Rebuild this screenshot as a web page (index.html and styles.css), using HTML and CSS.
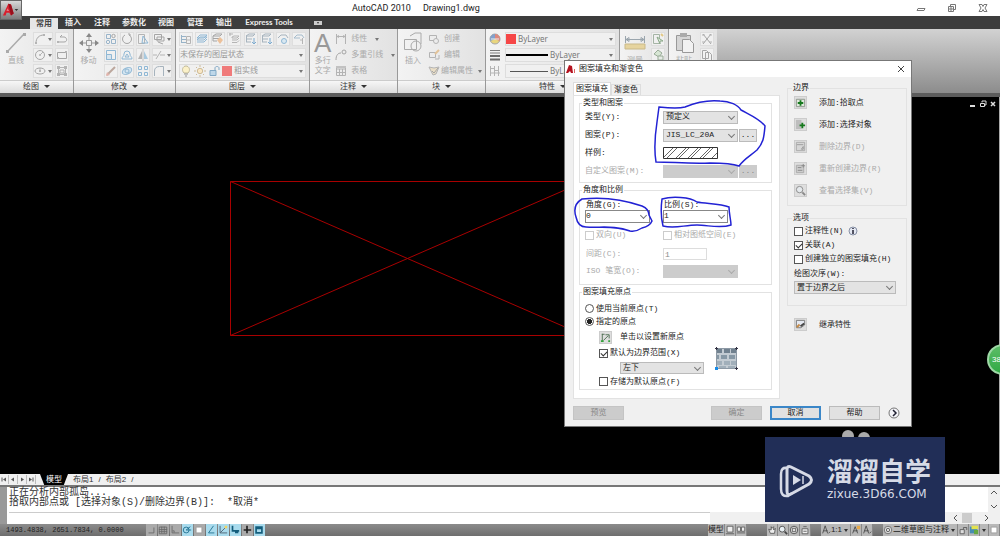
FILE: index.html
```html
<!DOCTYPE html>
<html lang="zh-CN">
<head>
<meta charset="utf-8">
<title>AutoCAD 2010 - Drawing1.dwg</title>
<link rel="stylesheet" href="styles.css">
</head>
<body>
<svg class="sprite" aria-hidden="true">
  <symbol id="i-arc" viewBox="0 0 12 12"><path d="M2 10C2 5 5 2 10 2" stroke="#999"/><path d="M1 9h2v2H1zM9 1h2v2H9z" fill="#aaa"/></symbol>
  <symbol id="i-circle" viewBox="0 0 12 12"><circle cx="6" cy="6" r="4.5" stroke="#999"/><path d="M6 6L9 3" stroke="#aaa"/><circle cx="6" cy="6" r="1" fill="#aaa"/></symbol>
  <symbol id="i-ellipse" viewBox="0 0 12 12"><ellipse cx="6" cy="6" rx="5" ry="3" stroke="#999"/><circle cx="6" cy="6" r="1" fill="#999"/><path d="M6 3v3" stroke="#aaa"/></symbol>
  <symbol id="i-pline" viewBox="0 0 12 12"><path d="M1 9h7c4 0 3-5 0-5H4M4 4L6 2" stroke="#999"/><path d="M1 8h2v2H1z" fill="#aaa"/></symbol>
  <symbol id="i-rect" viewBox="0 0 12 12"><path d="M1.500 3.500h9v6h-9z" stroke="#999"/><path d="M9 2h2v2H9zM1 8h2v2H1z" fill="#aaa"/></symbol>
  <symbol id="i-region" viewBox="0 0 12 12"><path d="M2.500 2.500h7v7h-7zM4 5h4v3H4z" stroke="#aaa"/><path d="M1 1h3v3H1zM8 1h3v3H8zM1 8h3v3H1zM8 8h3v3H8z" fill="#aaa"/></symbol>
  <symbol id="i-copy" viewBox="0 0 12 12"><path d="M1.500 1.500h4v4h-4zM6.500 6.500h4v4h-4z" stroke="#8aaac4"/><circle cx="8.500" cy="3" r="1.700" stroke="#999"/><circle cx="3" cy="9" r="1.700" stroke="#8aaac4"/></symbol>
  <symbol id="i-rotate" viewBox="0 0 12 12"><path d="M4 2a4.500 4.500 0 1 0 4 0M8 2V0M8 2h2" stroke="#999"/></symbol>
  <symbol id="i-stretch" viewBox="0 0 12 12"><path d="M1.500 1.500h6v9h-6z" stroke="#aaa"/><path d="M6 3l5 7H5z" stroke="#7faed0"/></symbol>
  <symbol id="i-trim" viewBox="0 0 12 12"><path d="M1.500 1.500h7v5h-7zM4 4h7v4H4zM5 9l5 2" stroke="#999"/></symbol>
  <symbol id="i-scale" viewBox="0 0 12 12"><path d="M1.500 1.500h9v9h-9z" stroke="#7faed0"/><path d="M1.500 5.500h5v5h-5z" stroke="#7faed0" fill="#d4e4ef"/></symbol>
  <symbol id="i-offset" viewBox="0 0 12 12"><path d="M1 10c0-3 2-2 2-5a3 3 0 0 1 6 0c0 3 2 2 2 5z" stroke="#7faed0"/><path d="M4 8l2-3 2 3z" stroke="#7faed0"/></symbol>
  <symbol id="i-mirror" viewBox="0 0 12 12"><path d="M5 2v8H1z" fill="#aaa"/><path d="M7 2v8h4z" fill="#9cc3dd"/><path d="M6 0v12" stroke="#bbb"/></symbol>
  <symbol id="i-extend" viewBox="0 0 12 12"><path d="M0 6h4M7 6h5M3 10L8 2" stroke="#aaa"/></symbol>
  <symbol id="i-erase" viewBox="0 0 12 12"><path d="M2 10L10 2" stroke="#b39b8f" stroke-width="2"/><path d="M1 11l4-1-3-3z" fill="#e0a9a0"/></symbol>
  <symbol id="i-explode" viewBox="0 0 12 12"><ellipse cx="6" cy="6" rx="5" ry="3" transform="rotate(-25 6 6)" stroke="#7faed0" fill="#cfe3f1"/><circle cx="6" cy="6" r="2" stroke="#7faed0"/></symbol>
  <symbol id="i-array" viewBox="0 0 12 12"><path d="M1.500 1.500h3v3h-3zM7.500 1.500h3v3h-3zM1.500 7.500h3v3h-3zM7.500 7.500h3v3h-3z" stroke="#7faed0"/></symbol>
  <symbol id="i-fillet" viewBox="0 0 12 12"><path d="M1.500 11V6c0-3 2-4.500 5-4.500h4V11" stroke="#9aa9b5"/></symbol>
  <symbol id="i-layer" viewBox="0 0 12 12"><path d="M1 3.500h5M1 6.500h5M1 9.500h5M1.500 2v8" stroke="#88a9c2"/><path d="M6.500 3.500h4v7h-4zM6 7h5" stroke="#aaa"/></symbol>
  <symbol id="i-stack" viewBox="0 0 12 12"><path d="M1 7l3-3h7L8 7zM1 9l7 0 3-3M1 5l3-3h7L8 5z" stroke="#7faed0"/></symbol>
  <symbol id="i-orange" viewBox="0 0 12 12"><path d="M1 3l3-2h6L8 3zM1 3v5h4M1 5.500h6" stroke="#999"/><path d="M8 4l3 3-3 4-3-4z" fill="#ecb98c"/></symbol>
  <symbol id="i-tree" viewBox="0 0 12 12"><path d="M1 1h4M2 0v3M4 4l2-1h5l-2 2H4zM4 7h5l2-2M4 9.500h5l2-2" stroke="#aaa"/></symbol>
  <symbol id="i-freeze" viewBox="0 0 12 12"><path d="M1 3l3-2h6L8 3zM1 6h6M1 9h5M1.500 3v6" stroke="#9aa9b5"/><path d="M9 5v6M7 9l2 2 2-2" stroke="#6aa0ca"/></symbol>
  <symbol id="i-layoff" viewBox="0 0 12 12"><path d="M1 5l3-3h5l2 3" stroke="#9aa9b5"/><circle cx="7" cy="8" r="2.500" stroke="#7faed0" fill="#d6e8f3"/></symbol>
  <symbol id="i-uniso" viewBox="0 0 12 12"><path d="M1 5l3-3h5l2 3M1 5h6" stroke="#9ab4c6"/><path d="M9.500 5v6M7 7h3" stroke="#aaa"/></symbol>
  <symbol id="i-bulb" viewBox="0 0 12 12"><path d="M4 8C1 5 3 1 6 1s5 4 2 7z" fill="#fdf2c2" stroke="#bbb08a"/><path d="M4 9h4M5 11h2" stroke="#888"/></symbol>
  <symbol id="i-sun" viewBox="0 0 12 12"><circle cx="6" cy="6" r="2.700" fill="#fbe6bd" stroke="#c9b48a"/><path d="M6 0v2M6 10v2M0 6h2M10 6h2M2 2l1 1M9 9l1 1M2 10l1-1M9 3l1-1" stroke="#c9b48a"/></symbol>
  <symbol id="i-lock" viewBox="0 0 12 12"><path d="M2 5.500h6v5H2z" fill="#b6d3e8" stroke="#6f9dbf"/><path d="M7 5V3c0-2 4-2 4 0v2" stroke="#6f9dbf"/></symbol>
  <symbol id="i-linear" viewBox="0 0 12 12"><path d="M1.500 1v10M10.500 1v10M2 3.500h8M2 3.500l2-1M2 3.500l2 1M10 3.500l-2-1M10 3.500l-2 1" stroke="#aaa"/></symbol>
  <symbol id="i-leader" viewBox="0 0 12 12"><path d="M1 11c0-5 2-7 5-7" stroke="#999"/><circle cx="9" cy="3" r="2" stroke="#999"/></symbol>
  <symbol id="i-table" viewBox="0 0 12 12"><path d="M1.500 1.500h9v9h-9zM1 4h10M4.500 4v7M7.500 4v7M1 7.500h10" stroke="#aaa"/><path d="M1 1h10v2H1z" fill="#bbb"/></symbol>
  <symbol id="i-block" viewBox="0 0 12 12"><path d="M1.500 2.500h7v5h-7z" stroke="#aaa"/><circle cx="8" cy="8" r="2.500" stroke="#aaa" fill="#eee"/></symbol>
  <symbol id="i-blockedit" viewBox="0 0 12 12"><path d="M1.500 3.500h6v5h-6zM7 10h4V6" stroke="#aaa"/><path d="M7 5l4-4" stroke="#e2bd8a" stroke-width="2"/></symbol>
  <symbol id="i-attr" viewBox="0 0 12 12"><path d="M1 2l5 1 5-1-3 7-3 1z" fill="#eadcc0" stroke="#aaa"/><path d="M4 6l2 2 4-5" stroke="#999"/></symbol>
  <symbol id="i-wheel" viewBox="0 0 12 12"><circle cx="6" cy="6" r="5" fill="#e8d26a" stroke="#999"/><path d="M6 6V1a5 5 0 0 1 4.500 7z" fill="#d9776c"/><path d="M6 6V1A5 5 0 0 0 1.500 8z" fill="#6f93c7"/><path d="M2 6h8" stroke="#eee"/></symbol>
  <symbol id="i-weight" viewBox="0 0 12 12"><path d="M1 1.500h10M1 4h10" stroke="#666"/><path d="M1 7h10M1 10.500h10" stroke="#555" stroke-width="2"/></symbol>
  <symbol id="i-ltype" viewBox="0 0 12 12"><path d="M1.500 1v10M5.500 1v10M9.500 1v10M1 3.500h4M6 5.500h4M1 8h10" stroke="#aaa"/></symbol>
  <symbol id="i-green" viewBox="0 0 12 12"><path d="M1.500 1.500h6v9h-6z" stroke="#9a9"/><path d="M5 4l6 4-3 0 0 3z" fill="#dfeedd" stroke="#7a9c78"/><path d="M9 1l2 2" stroke="#dfc274" stroke-width="2"/></symbol>
  <symbol id="i-shapes" viewBox="0 0 12 12"><path d="M2 5l4-4 4 3-3 4z" fill="#d3e5d0" stroke="#8a9f88"/><path d="M6 7h5v4H6z" fill="#e5ebe5" stroke="#8a9f88"/></symbol>
  <symbol id="i-cut" viewBox="0 0 12 12"><path d="M2 1l8 10M10 1L2 11" stroke="#999"/><path d="M1 9h3M8 9h3M1 2h3M8 2h3" stroke="#aaa"/></symbol>
  <symbol id="i-pages" viewBox="0 0 12 12"><path d="M1.500 1.500h4l2 2v6h-6zM4.500 3.500h4l2 2v6h-6z" fill="#f3f3f3" stroke="#999"/></symbol>
  <symbol id="i-pick" viewBox="0 0 12 12"><path d="M1.500 2.500h9v8h-9z" fill="#dfe9dc" stroke="#8b938a"/><path d="M6 3.500v6M3 6.500h6" stroke="#16791d" stroke-width="2"/></symbol>
  <symbol id="i-select" viewBox="0 0 12 12"><path d="M1 1h6v10H1z" fill="#bdbdbd"/><path d="M8 4v6M5 7h6" stroke="#16791d" stroke-width="2"/></symbol>
  <symbol id="i-remove" viewBox="0 0 12 12"><path d="M1.500 1.500h9v9h-9z" fill="#d6d6d6" stroke="#aaa"/><path d="M2 4h7M7 9l2-3v3z" stroke="#999"/></symbol>
  <symbol id="i-recreate" viewBox="0 0 12 12"><path d="M1.500 2.500h8v8h-8z" fill="#ccc" stroke="#aaa"/><path d="M3 5h4M3 8h5M9 1v4M7 3h4" stroke="#888"/></symbol>
  <symbol id="i-view" viewBox="0 0 12 12"><circle cx="5" cy="5" r="3.500" fill="#e5e9ec" stroke="#888"/><path d="M8 8l3 3" stroke="#888" stroke-width="2"/></symbol>
  <symbol id="i-inherit" viewBox="0 0 12 12"><path d="M1.500 1.500h9v5l-4 3h-5z" fill="#e4e8f0" stroke="#777"/><path d="M6 8l4-3" stroke="#444" stroke-width="2"/><path d="M2 9l3-3" stroke="#c58a45" stroke-width="2"/></symbol>
  <symbol id="i-origin" viewBox="0 0 12 12"><path d="M2.500 2v8M2 2.500h3M4 9l5-5M6 3h4v4" stroke="#4c6c50"/><path d="M1 9h3v2H1zM9 9h2v2H9z" fill="#34a33c"/></symbol>
  <symbol id="s-snap" viewBox="0 0 12 12"><path d="M3 9.500h6.500V3" stroke="#666"/></symbol>
  <symbol id="s-grid" viewBox="0 0 12 12"><path d="M1.500 2.500h9v8h-9zM1 5.500h10M1 8h10M4.500 2v8M7.500 2v8" stroke="#666"/></symbol>
  <symbol id="s-ortho" viewBox="0 0 12 12"><path d="M2.500 1v8.500H11M5 9V7H3" stroke="#666"/></symbol>
  <symbol id="s-polar" viewBox="0 0 12 12"><circle cx="5" cy="6" r="3.500" stroke="#176a8c"/><path d="M5 6l5-4M5 6h6" stroke="#176a8c"/></symbol>
  <symbol id="s-box" viewBox="0 0 12 12"><path d="M2.500 2.500h7v7h-7z" fill="#fff" stroke="#999"/></symbol>
  <symbol id="s-angle" viewBox="0 0 12 12"><path d="M9 1L3 9.500h7" stroke="#176a8c"/></symbol>
  <symbol id="s-ducs" viewBox="0 0 12 12"><path d="M2.500 1v8.500H11M3 9l6-6" stroke="#456"/><path d="M8 1h3v3H8z" fill="#f2d35f"/></symbol>
  <symbol id="s-dyn" viewBox="0 0 12 12"><path d="M3 1v6h8M6 9h4" stroke="#135d7c" stroke-width="2"/></symbol>
  <symbol id="s-plus" viewBox="0 0 12 12"><path d="M6 1v9M2 6h9" stroke="#222" stroke-width="2"/></symbol>
  <symbol id="s-qp" viewBox="0 0 12 12"><path d="M2.500 2.500h7v7h-7zM2 4h8" stroke="#135d7c" stroke-width="2"/></symbol>
  <symbol id="s-page" viewBox="0 0 12 12"><path d="M2.500 1.500h7v7h-7zM1 10.500h10" fill="#eee" stroke="#555"/></symbol>
  <symbol id="s-cols" viewBox="0 0 12 12"><path d="M1.500 2.500h4v5h-4zM6.500 2.500h4v5h-4zM1 9.500h10" fill="#eee" stroke="#555"/></symbol>
  <symbol id="s-hand" viewBox="0 0 12 12"><path d="M2 5l2 5h5l1-6-2 2V2L6 4 5 2v4z" fill="#eee" stroke="#555"/></symbol>
  <symbol id="s-zoom" viewBox="0 0 12 12"><circle cx="5" cy="5" r="3.500" fill="#e7eef2" stroke="#444"/><path d="M8 8l3 3" stroke="#444" stroke-width="2"/></symbol>
  <symbol id="s-ring" viewBox="0 0 12 12"><circle cx="6" cy="6" r="4.500" stroke="#444" fill="#ddd"/><path d="M4 4h4v4H4z" stroke="#555"/></symbol>
  <symbol id="s-motion" viewBox="0 0 12 12"><path d="M2.500 4.500h7v6h-7zM4 7.500h4M4 2h4" fill="#eee" stroke="#555"/></symbol>
  <symbol id="s-person" viewBox="0 0 12 12"><path d="M5 1L2 10M5 1l3 9M3 7h5M9 10l2-2" stroke="#444"/></symbol>
  <symbol id="s-ann" viewBox="0 0 12 12"><path d="M5 2L2 10M5 2l3 8M3 7h5" stroke="#444"/><path d="M7 1h4v4H7z" fill="#e6a94a"/></symbol>
  <symbol id="s-gear" viewBox="0 0 12 12"><circle cx="6" cy="6" r="4.500" stroke="#666" fill="#ddd"/><circle cx="6" cy="6" r="2" stroke="#555"/></symbol>
  <symbol id="s-lock" viewBox="0 0 12 12"><path d="M2.500 5.500h5v5h-5z" fill="#ddd" stroke="#555"/><path d="M6.500 5V3h4v3" stroke="#555"/></symbol>
  <symbol id="s-iso" viewBox="0 0 12 12"><path d="M1 2h9v8H1z" fill="#478db3"/><path d="M3 1h8v4H3z" fill="#e3e34f"/><path d="M6 6h5v5H6z" fill="#65a943"/></symbol>
</svg>

<main class="app">
  <header class="titlebar">
    <h1 class="title"><span>AutoCAD 2010</span><span>Drawing1.dwg</span></h1>
    <div class="winbtns">
      <button aria-label="最小化"><svg viewBox="0 0 10 10"><path d="M2 5.500h7l-1 2H1z" stroke="#777"/></svg></button>
      <button aria-label="还原"><svg viewBox="0 0 10 10"><path d="M1.500 3.500h5v5h-5zM3.500 3V1.500h5v5H7M3 5h2v2H3z" stroke="#777"/></svg></button>
      <button aria-label="关闭"><svg viewBox="0 0 10 10"><path d="M1 1.500h3l1 2 1-2h3L7 5l2 3.500H6l-1-2-1 2H1L3 5z" stroke="#777"/></svg></button>
    </div>
    <button class="appbtn" aria-label="应用程序菜单"><svg viewBox="0 0 22 20"><path d="M2 16L8 3l3 1 3 10-3 2-2-3-3 0-1 3z" fill="#d81f2d"/><path d="M8 3l3 1 3 10-3 2z" fill="#98101c"/><path d="M7 8l2 3H6z" fill="#fff" opacity=".4"/><path d="M15 9h4l-2 2z" fill="#333"/></svg></button>
  </header>

  <nav class="menu">
    <button class="menu-item active">常用</button><button class="menu-item">插入</button><button class="menu-item">注释</button><button class="menu-item wide">参数化</button><button class="menu-item">视图</button><button class="menu-item">管理</button><button class="menu-item">输出</button><button class="menu-item express">Express Tools</button><button class="menu-item mini" aria-label="最小化功能区"><svg viewBox="0 0 8 6"><path d="M0 1h8v4H0z" fill="#ccc"/><path d="M3 2h2L4 4z" fill="#333"/></svg></button>
  </nav>

  <section class="ribbon">
    <div class="panel p-draw">
      <div class="tools">
        <button class="big"><svg viewBox="0 0 22 22"><path d="M2 20L19 2" stroke="#aaa" stroke-width="1.500"/><path d="M1 18h3v3H1zM18 1h3v3h-3z" fill="#aaa"/></svg>直线</button>
        <div class="grid2">
          <button class="tool drop"><svg><use href="#i-arc"/></svg></button><button class="tool"><svg><use href="#i-pline"/></svg></button>
          <button class="tool drop"><svg><use href="#i-circle"/></svg></button><button class="tool"><svg><use href="#i-rect"/></svg></button>
          <button class="tool drop"><svg><use href="#i-ellipse"/></svg></button><button class="tool"><svg><use href="#i-region"/></svg></button>
        </div>
      </div>
      <button class="caption drop">绘图</button>
    </div>
    <div class="panel p-modify">
      <div class="tools">
        <button class="big"><svg viewBox="0 0 22 22"><path d="M11 4v14M4 11h14" stroke="#999"/><path d="M11 1l3 4H8zM11 21l3-4H8zM1 11l4-3v6zM21 11l-4-3v6z" fill="#888"/><path d="M8.500 8.500h5v5h-5z" fill="#eee" stroke="#999"/></svg>移动</button>
        <div class="grid4">
          <button class="tool"><svg><use href="#i-copy"/></svg></button><button class="tool"><svg><use href="#i-rotate"/></svg></button><button class="tool"><svg><use href="#i-stretch"/></svg></button><button class="tool drop"><svg><use href="#i-trim"/></svg></button>
          <button class="tool"><svg><use href="#i-scale"/></svg></button><button class="tool"><svg><use href="#i-offset"/></svg></button><button class="tool"><svg><use href="#i-mirror"/></svg></button><button class="tool drop"><svg><use href="#i-extend"/></svg></button>
          <button class="tool"><svg><use href="#i-erase"/></svg></button><button class="tool"><svg><use href="#i-explode"/></svg></button><button class="tool"><svg><use href="#i-array"/></svg></button><button class="tool drop"><svg><use href="#i-fillet"/></svg></button>
        </div>
      </div>
      <button class="caption drop">修改</button>
    </div>
    <div class="panel p-layer">
      <div class="tools stack">
        <div class="line spread"><button class="tool"><svg><use href="#i-layer"/></svg></button><button class="tool"><svg><use href="#i-stack"/></svg></button><button class="tool"><svg><use href="#i-orange"/></svg></button><button class="tool"><svg><use href="#i-tree"/></svg></button><button class="tool"><svg><use href="#i-freeze"/></svg></button><button class="tool"><svg><use href="#i-freeze"/></svg></button><button class="tool"><svg><use href="#i-layoff"/></svg></button><button class="tool"><svg><use href="#i-uniso"/></svg></button></div>
        <button class="field drop">未保存的图层状态</button>
        <button class="field drop"><svg><use href="#i-bulb"/></svg><svg><use href="#i-sun"/></svg><svg><use href="#i-lock"/></svg><i class="swatch soft"></i>粗实线</button>
      </div>
      <button class="caption drop">图层</button>
    </div>
    <div class="panel p-note">
      <div class="tools">
        <button class="big"><span class="bigA">A</span><span>多行<br>文字</span></button>
        <div class="stack">
          <button class="entry drop"><svg><use href="#i-linear"/></svg>线性</button>
          <button class="entry drop"><svg><use href="#i-leader"/></svg>多重引线</button>
          <button class="entry"><svg><use href="#i-table"/></svg>表格</button>
        </div>
      </div>
      <button class="caption drop">注释</button>
    </div>
    <div class="panel p-block">
      <div class="tools">
        <button class="big"><svg viewBox="0 0 22 22"><path d="M2.500 7.500h12v10h-12z" stroke="#aaa"/><path d="M8 4l5-3h6v11" stroke="#aaa"/><circle cx="14" cy="14" r="5" stroke="#aaa"/></svg>插入</button>
        <div class="stack">
          <button class="entry"><svg><use href="#i-block"/></svg>创建</button>
          <button class="entry"><svg><use href="#i-blockedit"/></svg>编辑</button>
          <button class="entry drop"><svg><use href="#i-attr"/></svg>编辑属性</button>
        </div>
      </div>
      <button class="caption drop">块</button>
    </div>
    <div class="panel p-prop">
      <div class="tools stack">
        <div class="line"><svg><use href="#i-wheel"/></svg><button class="field drop latin"><i class="swatch"></i>ByLayer</button></div>
        <div class="line"><svg><use href="#i-weight"/></svg><button class="field drop latin"><i class="thick"></i>ByLayer</button></div>
        <div class="line"><svg><use href="#i-ltype"/></svg><button class="field drop latin"><i class="thin"></i>ByLayer</button></div>
      </div>
      <button class="caption drop">特性</button>
    </div>
    <div class="panel p-util">
      <div class="tools">
        <button class="big"><svg viewBox="0 0 22 22"><path d="M1.500 4v7M20.500 4v7M2 7.500h18M2 7.500l3-2v4zM20 7.500l-3-2v4z" stroke="#9aa5ad"/><path d="M1 12h20v5H1z" fill="#e6d49f"/><path d="M1 12h20v5H1z" stroke="#c9b98a"/></svg>测量</button>
        <div class="stack"><button class="tool"><svg><use href="#i-green"/></svg></button><button class="tool"><svg><use href="#i-shapes"/></svg></button></div>
      </div>
    </div>
    <div class="panel p-clip">
      <div class="tools">
        <button class="big"><svg viewBox="0 0 22 22"><path d="M3.500 3.500h14v15h-14z" fill="#d5d5d5" stroke="#999"/><path d="M7 1h7v4H7z" fill="#aaa"/><path d="M9.500 7.500h7l4 4v9h-11z" fill="#f2f2f2" stroke="#999"/></svg>粘贴</button>
        <div class="stack"><button class="tool"><svg><use href="#i-cut"/></svg></button><button class="tool"><svg><use href="#i-pages"/></svg></button></div>
      </div>
    </div>
  </section>

  <section class="canvas">
    <svg class="drawing" width="700" height="300" viewBox="0 0 700 300"><path d="M230.500 84.500H584.500V238.500H230.500zL584.500 238.500M230.500 238.500L584.500 84.500" stroke="#a80000"/></svg>
    <div class="docbtns">
      <button aria-label="最小化"><svg viewBox="0 0 8 8"><path d="M1 6h5" stroke="#ddd" stroke-width="2"/></svg></button>
      <button aria-label="还原"><svg viewBox="0 0 8 8"><path d="M1.500 3.500h4v3h-4zM3 2.500V1h4v4H6" stroke="#ddd"/></svg></button>
      <button aria-label="关闭"><svg viewBox="0 0 8 8"><path d="M2 2l4 4M6 2L2 6" stroke="#ddd" stroke-width="1.500"/></svg></button>
    </div>
    <span class="ball">38</span>
  </section>

  <nav class="sheets">
    <button class="nav" aria-label="第一个"><svg viewBox="0 0 8 8"><path d="M2 2v4" stroke="#555"/><path d="M6 2v4L3 4z" fill="#555"/></svg></button><button class="nav" aria-label="上一个"><svg viewBox="0 0 8 8"><path d="M5 2v4L2 4z" fill="#555"/></svg></button><button class="nav" aria-label="下一个"><svg viewBox="0 0 8 8"><path d="M3 2v4l3-2z" fill="#555"/></svg></button><button class="nav" aria-label="最后一个"><svg viewBox="0 0 8 8"><path d="M6 2v4" stroke="#555"/><path d="M2 2v4l3-2z" fill="#555"/></svg></button>
    <button class="sheet current">模型</button><button class="sheet">布局1</button><span>/</span><button class="sheet">布局2</button><span>/</span>
  </nav>

  <section class="command">
    <div class="grip"></div>
    <div class="history">
      <p>正在分析内部孤岛...</p>
      <p>拾取内部点或 [选择对象(S)/删除边界(B)]:&nbsp; *取消*</p>
      <input class="prompt" aria-label="命令行">
    </div>
    <div class="vscroll"><svg viewBox="0 0 10 8"><path d="M2 6l3-3 3 3" stroke="#555"/></svg><svg viewBox="0 0 10 8"><path d="M2 2l3 3 3-3" stroke="#555"/></svg></div>
    <div class="hscroll"><svg viewBox="0 0 8 10"><path d="M5 2L2 5l3 3" stroke="#555"/></svg><i></i><svg viewBox="0 0 8 10"><path d="M3 2l3 3-3 3" stroke="#555"/></svg></div>
  </section>

  <footer class="status">
    <span class="coords">1493.4838, 2651.7834, 0.0000</span>
    <div class="toggles">
      <button><svg><use href="#s-snap"/></svg></button><button><svg><use href="#s-grid"/></svg></button><button><svg><use href="#s-ortho"/></svg></button><button class="on"><svg><use href="#s-polar"/></svg></button><button><svg><use href="#s-box"/></svg></button><button class="on"><svg><use href="#s-angle"/></svg></button><button class="on"><svg><use href="#s-ducs"/></svg></button><button class="on"><svg><use href="#s-dyn"/></svg></button><button><svg><use href="#s-plus"/></svg></button><button class="on"><svg><use href="#s-qp"/></svg></button>
    </div>
    <div class="tray">
      <button>模型</button><button><svg><use href="#s-page"/></svg></button><button><svg><use href="#s-cols"/></svg></button>
      <i class="gap"></i>
      <button><svg><use href="#s-hand"/></svg></button><button><svg><use href="#s-zoom"/></svg></button><button><svg><use href="#s-ring"/></svg></button><button><svg><use href="#s-motion"/></svg></button>
      <i class="gap small"></i>
      <button><svg><use href="#s-person"/></svg>1:1<i class="arrow"></i></button><button><svg><use href="#s-ann"/></svg></button><button><svg><use href="#s-person"/></svg></button>
      <i class="gap small"></i>
      <button><svg><use href="#s-gear"/></svg>二维草图与注释<i class="arrow"></i></button><button><svg><use href="#s-lock"/></svg></button><button><svg><use href="#s-iso"/></svg></button><button aria-label="状态栏菜单"><i class="arrow"></i></button><button><svg><use href="#s-box"/></svg></button>
    </div>
  </footer>

  <section class="dialog" role="dialog" aria-labelledby="dlg-title">
    <header class="dlg-head">
      <svg viewBox="0 0 10 10"><path d="M0 9l3-8 3 1 1 7-2 0-1-2-2 2z" fill="#b5121f"/><path d="M8.500 5v4" stroke="#d66"/></svg>
      <h2 id="dlg-title">图案填充和渐变色</h2>
      <button aria-label="关闭"><svg viewBox="0 0 10 10"><path d="M2 2l6 6M8 2L2 8" stroke="#444"/></svg></button>
    </header>
    <form class="dlg-body">
      <div class="left">
        <div class="tabs"><button type="button" class="tab sel">图案填充</button><button type="button" class="tab">渐变色</button></div>
        <div class="page">
          <fieldset>
            <legend>类型和图案</legend>
            <div class="rows">
              <label for="type">类型(Y):</label><span class="combo"><select id="type"><option>预定义</option></select></span>
              <label for="pattern">图案(P):</label><span class="pair"><span class="combo"><select id="pattern"><option>JIS_LC_20A</option></select></span><button type="button" class="dots">...</button></span>
              <span>样例:</span><svg class="sample" width="55" height="12" viewBox="0 0 55 12"><path d="M.5 .5h54v11h-54z" fill="#fff" stroke="#333"/><path d="M1 10L10 1M4 11L14 1M13 11L23 1M16 11L26 1M25 11L35 1M28 11L38 1M37 11L47 1M40 11L50 1M49 11L54 6" stroke="#666"/></svg>
              <label for="custom" class="off">自定义图案(M):</label><span class="pair"><span class="combo dim"><select id="custom" disabled><option></option></select></span><button type="button" class="dots" disabled>...</button></span>
            </div>
          </fieldset>
          <fieldset>
            <legend>角度和比例</legend>
            <div class="scales">
              <div><label for="angle">角度(G):</label><span class="combo white"><select id="angle"><option>0</option></select></span></div>
              <div><label for="ratio">比例(S):</label><span class="combo white"><select id="ratio"><option>1</option></select></span></div>
              <label class="check off"><input type="checkbox" disabled>双向(U)</label>
              <label class="check off"><input type="checkbox" disabled>相对图纸空间(E)</label>
              <label for="space" class="off">间距(C):</label><input id="space" class="text" value="1" disabled>
              <label for="iso" class="off">ISO 笔宽(O):</label><span class="combo dim"><select id="iso" disabled><option></option></select></span>
            </div>
          </fieldset>
          <fieldset>
            <legend>图案填充原点</legend>
            <div class="origin">
              <label class="check"><input type="radio" name="origin">使用当前原点(T)</label>
              <label class="check"><input type="radio" name="origin" checked>指定的原点</label>
              <div class="origin-set">
                <div class="origin-opts">
                  <label class="act"><button type="button" class="sq"><svg><use href="#i-origin"/></svg></button>单击以设置新原点</label>
                  <label class="check"><input type="checkbox" checked>默认为边界范围(X)</label>
                  <span class="combo corner"><select aria-label="边界范围"><option>左下</option></select></span>
                  <label class="check"><input type="checkbox">存储为默认原点(F)</label>
                </div>
                <svg class="brick" width="26" height="26" viewBox="0 0 26 26"><path d="M2 2h21v21H2z" fill="#c3cbd2"/><path d="M3 3h5v4H3zM10 3h6v4h-6zM17 3h5v4h-5z" fill="#71818f"/><path d="M3 9h2v4H3zM7 9h6v4H7zM15 9h6v4h-6z" fill="#8798a5"/><path d="M3 15h5v4H3zM10 15h6v4h-6zM17 15h5v4h-5zM5 20h7v2H5zM14 20h7v2h-7z" fill="#a1afba"/><path d="M2.500 2v21M22.500 2v21M2 2.500h21M2 22.500h21" stroke="#8c98a4"/><path d="M1 2.500h3M2.500 1v3M21 2.500h3M22.500 1v3M21 22.500h3M22.500 21v3" stroke="#334"/><path d="M1 21h3v3H1z" fill="#168be8"/></svg>
              </div>
            </div>
          </fieldset>
        </div>
      </div>
      <div class="right">
        <fieldset>
          <legend>边界</legend>
          <div class="acts">
            <label class="act"><button type="button" class="sq"><svg><use href="#i-pick"/></svg></button>添加:拾取点</label>
            <label class="act"><button type="button" class="sq"><svg><use href="#i-select"/></svg></button>添加:选择对象</label>
            <label class="act off"><button type="button" class="sq" disabled><svg><use href="#i-remove"/></svg></button>删除边界(D)</label>
            <label class="act off"><button type="button" class="sq" disabled><svg><use href="#i-recreate"/></svg></button>重新创建边界(R)</label>
            <label class="act off"><button type="button" class="sq" disabled><svg><use href="#i-view"/></svg></button>查看选择集(V)</label>
          </div>
        </fieldset>
        <fieldset>
          <legend>选项</legend>
          <div class="options">
            <div class="line"><label class="check"><input type="checkbox">注释性(N)</label><svg class="info" viewBox="0 0 10 10"><circle cx="5" cy="5" r="4" fill="#e4e8f2" stroke="#8790a5"/><path d="M5 4v4M5 2v1" stroke="#223" stroke-width="1.500"/></svg></div>
            <label class="check"><input type="checkbox" checked>关联(A)</label>
            <label class="check"><input type="checkbox">创建独立的图案填充(H)</label>
            <label for="order" class="order">绘图次序(W):</label>
            <span class="combo full"><select id="order"><option>置于边界之后</option></select></span>
          </div>
        </fieldset>
        <label class="act inherit"><button type="button" class="sq"><svg><use href="#i-inherit"/></svg></button>继承特性</label>
      </div>
      <div class="buttons">
        <button type="button" class="btn first" disabled>预览</button>
        <button type="button" class="btn" disabled>确定</button>
        <button type="button" class="btn default">取消</button>
        <button type="button" class="btn">帮助</button>
        <button type="button" class="more" aria-label="更多选项"><svg viewBox="0 0 12 12"><circle cx="6" cy="6" r="5" fill="#f4f4f8" stroke="#777"/><path d="M5 3l3 3-3 3" stroke="#223" stroke-width="1.500"/></svg></button>
      </div>
    </form>
    <svg class="marks" viewBox="564 60 348 367"><path d="M659 107C668 108 678 109 685 107C697 102 710 100 720 101C730 101 738 105 741 110C750 115 760 119 765 126C764 136 764 142 757 150C750 156 744 159 739 166C731 163 722 163 710 163C690 164 672 162 656 162C654 150 655 135 657 122zM582 199C600 197 622 199 642 206Q649 209 649 215L652 221Q650 226 642 228Q636 232 630 231C615 225 600 228 586 227Q578 227 576 217Q572 205 582 199zM662 199C672 196 690 197 697 202C706 204 720 203 729 207C729 214 731 220 731 225C720 229 708 225 697 225C684 225 675 229 663 226Q660 214 662 199z" stroke="#2222d4" stroke-width="1.500"/></svg>
  </section>

  <svg class="ghost" viewBox="0 0 30 12"><circle cx="6" cy="6" r="6" fill="#aaa"/><circle cx="22" cy="8" r="6" fill="#aaa"/></svg>
  <aside class="mark">
    <svg viewBox="0 0 36 36"><path d="M12 5L30 14Q35 18 30 22L12 32Q8 34 8 29V8Q8 3 12 5" stroke="#d6dae6" stroke-width="3"/><path d="M8 6Q2 5 2 12V27Q2 35 9 34L13 31" stroke="#d6dae6" stroke-width="2.500"/><path d="M14 13l8 5-8 5z" fill="#d6dae6"/><path d="M24 14v8" stroke="#d6dae6" stroke-width="1.500"/></svg>
    <div><strong>溜溜自学</strong><span>zixue.3D66.COM</span></div>
  </aside>
</main>
</body>
</html>
```
FILE: styles.css
```css
* { box-sizing: border-box; }
body { margin: 0; font: 8px/10px "Liberation Sans", "Noto Sans CJK SC", sans-serif; color: #222; }
button, input, select { font: inherit; color: inherit; margin: 0; padding: 0; border: 0; background: none; border-radius: 0; }
button { white-space: nowrap; }
svg { fill: none; flex: none; display: block; }
h1, h2, p { margin: 0; font-weight: normal; }
.sprite { position: absolute; width: 0; height: 0; }
.app { position: relative; display: flex; flex-direction: column; min-height: 100vh; overflow: hidden; background: #fff; }

.titlebar { position: relative; display: flex; align-items: center; height: 16px; }
.title { flex: 1; display: flex; gap: 12px; padding-left: 352px; font: 9px/12px Roboto, sans-serif; color: #222; }
.winbtns { display: flex; gap: 21px; padding-right: 12px; }
.winbtns svg { width: 10px; height: 10px; }
.appbtn { position: absolute; left: 0; top: 0; z-index: 2; background: linear-gradient(#d8d8d8, #7d7d7d); border: 1px solid #666; }
.appbtn svg { width: 20px; height: 18px; }

.menu { display: flex; height: 13px; padding-left: 30px; background: #3d3d3d; }
.menu-item { width: 28px; margin-right: 1px; color: #eee; font-weight: bold; line-height: 13px; }
.menu-item.active { background: #e6e6e6; color: #444; margin-top: 2px; line-height: 11px; }
.menu-item.wide { width: 34px; }
.menu-item.express { width: 60px; font: bold 8px/13px Lato, sans-serif; }
.menu-item.mini { display: flex; align-items: center; justify-content: center; width: 36px; }
.mini svg { width: 8px; height: 6px; }

.ribbon { display: flex; height: 68px; border-bottom: 4px solid #5c5c5c; background: linear-gradient(#d2d2d2, #8c8c8c); }
.panel { display: flex; flex-direction: column; flex: none; border-right: 1px solid #999; background: linear-gradient(90deg, #f3f3f3, #e2e2e2); }
.tools { flex: 1; display: flex; gap: 4px; padding: 3px 3px 0; }
.stack { display: flex; flex-direction: column; gap: 2px; }
.caption { height: 13px; border-top: 1px solid #ccc; background: linear-gradient(#f7f7f7, #dcdcdc); color: #333; }
.tool, .entry, .field, .line { display: flex; align-items: center; height: 14px; }
.tool { border: 1px solid #dedede; background: #f0f0f0; min-width: 14px; }
.ribbon .tool svg, .ribbon .entry svg, .ribbon .field svg, .ribbon .line svg { width: 12px; height: 12px; opacity: .85; }
.drop::after { content: ""; display: inline-block; border: 2px solid transparent; border-top: 3px solid #777; border-bottom: 0; margin-left: 2px; }
.caption.drop::after { margin-left: 5px; border-width: 3px 3px 0; border-top-color: #333; vertical-align: 1px; }
.entry.drop::after { margin-left: 4px; }
.big { display: flex; flex-direction: column; align-items: center; gap: 2px; width: 26px; color: #aaa; }
.big svg { width: 22px; height: 22px; }
.bigA { font: 26px/22px "Liberation Sans", sans-serif; color: #999; }
.entry { gap: 3px; color: #aaa; }
.grid2, .grid4 { display: grid; grid-template-rows: repeat(3, 14px); gap: 2px; align-content: start; }
.grid2 { grid-template-columns: 20px 14px; }
.grid4 { grid-template-columns: repeat(3, 14px) 20px; }
.field { flex: 1 0 auto; max-height: 14px; gap: 2px; padding-right: 2px; border: 1px solid #ddd; background: #f0f0f0; color: #999; }
.field.drop::after { margin-left: auto; }
.line { gap: 4px; }
.spread { justify-content: space-between; gap: 0; }
.latin { font: 8px/10px "Noto Sans", sans-serif; color: #777; }
.swatch { width: 10px; height: 10px; background: #f64747; }
.swatch.soft { background: #f07b7b; }
.thick { width: 42px; height: 2px; background: #000; }
.thin { width: 38px; height: 1px; margin: 0 0 0 4px; background: #555; }
.p-draw { width: 74px; }
.p-modify { width: 102px; }
.p-layer { width: 134px; }
.p-note, .p-block { width: 88px; }
.p-note .tools, .p-block .tools { padding-left: 4px; }
.p-block .big { width: 30px; }
.p-block .entry { gap: 4px; }
.p-note .entry { gap: 4px; }
.p-block .entry.drop { gap: 1px; }
.p-prop { width: 134px; }
.p-util { width: 49px; }
.p-clip { width: 48px; border-right: 0; }

.canvas { position: relative; flex: 1; background: #000; border-right: 1px solid #aaa; }
.drawing { position: absolute; left: 0; top: 0; }
.docbtns { display: flex; justify-content: flex-end; gap: 2px; padding: 3px 2px 0; }
.docbtns svg { width: 8px; height: 8px; }
.ball { position: absolute; right: -19px; top: 247px; width: 31px; height: 31px; padding-left: 3px; border: 2px solid #9ed8a6; border-radius: 50%; background: linear-gradient(#5dbd68, #30a944); color: #fff; line-height: 27px; }

.sheets { display: flex; align-items: center; height: 11px; background: #f0f0f0; color: #333; }
.nav svg { width: 8px; height: 9px; }
.nav { border-right: 1px solid #bbb; }
.sheet { padding: 0 5px; }
.sheet.current { height: 11px; margin-left: 4px; padding: 0 6px; background: #000; color: #fff; clip-path: polygon(0 0, 100% 0, 85% 100%, 15% 100%); }

.command { display: grid; grid-template-columns: 7px 1fr 278px 12px; grid-template-rows: 25px 12px; border-top: 2px solid #777; background: #fff; }
.grip { grid-area: 1 / 1 / 3 / 2; background: #999; }
.history { grid-area: 1 / 2 / 3 / 4; padding: 1px 0 0 2px; font: 10px/10px "Liberation Mono", "Noto Sans CJK SC", monospace; color: #333; }
.history p { white-space: pre; }
.prompt { display: block; width: 100%; height: 12px; margin-top: 4px; border-top: 1px solid #ccc; }
.vscroll { grid-area: 1 / 4 / 2 / 5; display: flex; flex-direction: column; justify-content: space-between; padding: 1px; background: #f0f0f0; }
.vscroll svg { width: 10px; height: 8px; }
.hscroll { grid-area: 2 / 3 / 3 / 5; display: flex; align-items: center; gap: 2px; justify-content: flex-end; padding-right: 10px; background: #f0f0f0; }
.hscroll svg { width: 8px; height: 10px; }
.hscroll i { width: 10px; height: 10px; margin-right: 8px; background: #ccc; }

.status { display: flex; align-items: center; height: 12px; background: linear-gradient(#8c8c8c, #6e6e6e); }
.coords { width: 146px; padding-left: 6px; font: 7px/12px "Liberation Mono", monospace; white-space: nowrap; }
.toggles { display: flex; }
.toggles button { width: 11px; height: 12px; margin-right: 1px; background: #aaa; }
.toggles .on { background: #a9dbed; }
.toggles svg, .tray svg { width: 10px; height: 10px; }
.tray { display: flex; align-items: center; margin-left: auto; }
.tray button { display: flex; align-items: center; height: 12px; border-right: 1px solid #888; background: #b8b8b8; }
.arrow { margin: 0 2px; border: 2px solid transparent; border-top: 3px solid #333; border-bottom: 0; }
.gap { width: 20px; }
.gap.small { width: 10px; }

.dialog { position: absolute; left: 564px; top: 60px; z-index: 3; width: 348px; border: 1px solid #777; background: #f0f0f0; font: 8px/10px "Liberation Mono", "Noto Sans CJK SC", monospace; }
.dlg-head { display: flex; align-items: center; gap: 3px; height: 16px; padding: 0 5px 0 1px; background: #fff; }
.dlg-head h2 { flex: 1; font-size: 8px; line-height: 10px; }
.dlg-head svg { width: 10px; height: 10px; }
.dlg-body { display: grid; grid-template-columns: 207px 1fr; column-gap: 7px; padding: 5px 4px 6px 8px; }
.tabs { display: flex; align-items: flex-end; height: 13px; }
.tab { height: 11px; padding: 0 2px; border: 1px solid #ddd; border-bottom: 0; }
.tab.sel { height: 13px; background: #fff; }
.page { display: flex; flex-direction: column; gap: 2px; padding: 2px 7px 8px 5px; border: 1px solid #e2e2e2; background: #fff; }
fieldset { min-width: 0; margin: 0; padding: 0 5px; border: 1px solid #e2e2e2; }
legend { height: 10px; margin-left: -3px; padding: 0 1px; line-height: 10px; }
.off { color: #aaa; }
.rows { display: grid; grid-template-columns: 78px auto; grid-auto-rows: 18px; align-items: center; justify-content: start; padding-bottom: 2px; }
.combo { position: relative; display: block; width: 75px; height: 13px; }
.combo select { display: block; width: 100%; height: 100%; padding: 0 2px; appearance: none; border: 1px solid #bbb; background: #e3e3e3; line-height: 10px; }
.combo select:disabled { background: #ccc; border-color: #ccc; opacity: 1; }
.combo::after { content: ""; position: absolute; right: 4px; top: 3px; width: 4px; height: 4px; border: solid #777; border-width: 0 1px 1px 0; transform: rotate(45deg); pointer-events: none; }
.combo.dim::after { border-color: #aaa; }
.combo.white { width: 65px; }
.combo.white select { background: #fff; border-color: #888; padding: 0; }
.pair { display: flex; gap: 1px; }
.dots { width: 18px; height: 13px; border: 1px solid #bbb; background: #e3e3e3; line-height: 10px; }
.dots:disabled { background: #ccc; border-color: #ccc; color: #888; }
.scales { display: grid; grid-template-columns: 78px auto; grid-template-rows: 28px 20px 18px 16px; align-items: center; justify-content: start; padding: 2px 0 5px; }
.scales label { display: block; padding-left: 1px; }
.scales .check { padding-left: 0; }
.scales .check, .check { display: flex; align-items: center; gap: 2px; height: 13px; white-space: nowrap; }
.check input { position: relative; appearance: none; width: 9px; height: 9px; border: 1px solid #555; background: #fff; }
.check input:disabled { border-color: #ccc; }
.check input[type="checkbox"]:checked::after { content: ""; position: absolute; left: 1px; top: 1px; width: 5px; height: 3px; border: solid #333; border-width: 0 0 1px 1px; transform: rotate(-45deg); }
.check input[type="radio"] { border-radius: 50%; }
.check input[type="radio"]:checked { background: radial-gradient(#222 45%, #fff 55%); }
.text { width: 44px; height: 12px; padding: 0 1px; border: 1px solid #ddd; background: #fff; color: #888; }
.origin { padding: 5px 0 0; }
.origin-set { display: flex; align-items: center; justify-content: space-between; padding: 1px 26px 0 14px; }
.origin-opts { display: grid; grid-template-rows: 16px 16px 13px 15px; align-items: center; }
.origin-opts .act { gap: 8px; }
.corner { width: 84px; height: 12px; margin-left: 21px; }
.brick { margin-left: -12px; }
.act { display: flex; align-items: center; gap: 12px; white-space: nowrap; }
.sq { width: 13px; height: 13px; border: 1px solid #ccc; background: #dedede; }
.sq svg { width: 11px; height: 11px; }
.right { padding-top: 1px; }
.right fieldset { margin-bottom: 7px; padding: 0 1px; }
.right legend { margin-left: 3px; }
.right .check { height: 14px; }
.acts { display: grid; grid-auto-rows: 22px; align-items: start; padding: 3px 0 0 5px; height: 112px; }
.options { padding: 1px 9px 11px 5px; }
.info { width: 10px; height: 10px; margin-left: 1px; }
.order { display: block; margin: 3px 0 2px; }
.combo.full { width: 102px; height: 13px; }
.inherit { margin: 12px 0 0 7px; }
.buttons { grid-column: 1 / 3; display: flex; align-items: center; gap: 8px; padding: 7px 7px 0 0; }
.btn { width: 51px; height: 14px; border: 1px solid #bbb; background: #e1e1e1; }
.btn:disabled { background: #ccc; border-color: #c4c4c4; color: #888; }
.btn.default { border: 2px solid #3b87c8; line-height: 10px; }
.first { margin-right: auto; }
.more svg { width: 12px; height: 12px; }
.marks { position: absolute; left: -1px; top: -1px; width: 348px; height: 367px; pointer-events: none; }

.ghost { position: absolute; right: 128px; bottom: 94px; z-index: 1; width: 30px; height: 12px; }
.mark { position: absolute; right: 55px; bottom: 14px; z-index: 2; display: flex; align-items: center; gap: 12px; width: 180px; height: 85px; padding: 0 0 0 14px; background: #212e57; color: #d6dae6; }
.mark svg { width: 36px; height: 36px; }
.mark strong, .mark span { display: block; white-space: nowrap; }
.mark strong { font: bold 26px/26px "Liberation Sans", "Noto Sans CJK SC", sans-serif; }
.mark span { margin-top: 2px; font: 12px/14px "DejaVu Sans", sans-serif; }
```
